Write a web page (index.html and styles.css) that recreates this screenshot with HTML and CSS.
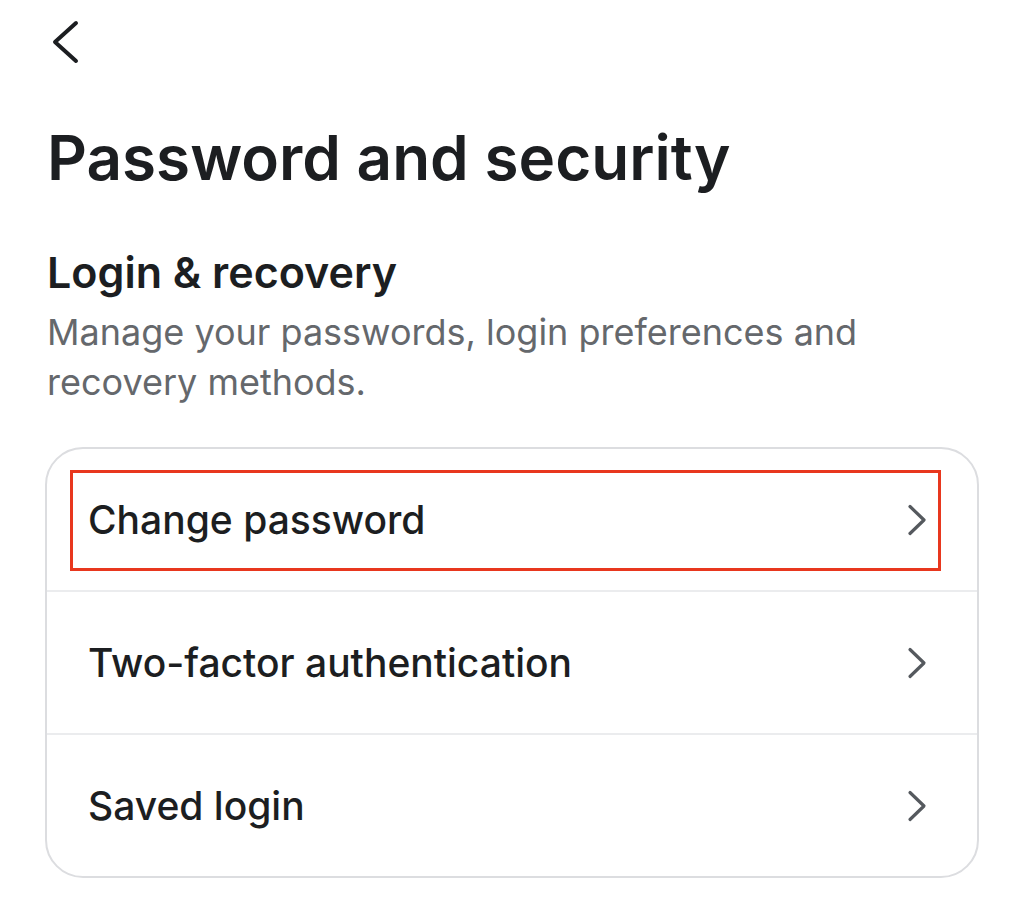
FILE: index.html
```html
<!DOCTYPE html>
<html lang="en">
<head>
<meta charset="utf-8">
<title>Password and security</title>
<link rel="stylesheet" href="styles.css">
</head>
<body>
<div class="page">
  <div class="topbar">
    <svg class="back" width="30" height="44" viewBox="0 0 30 44" aria-hidden="true">
      <path d="M26 3 L5 22 L26 41" fill="none" stroke="#1c1e21" stroke-width="4" stroke-linecap="round" stroke-linejoin="round"/>
    </svg>
  </div>
  <h1 class="title">Password and security</h1>
  <h2 class="section-title">Login &amp; recovery</h2>
  <p class="section-desc">Manage your passwords, login preferences and recovery methods.</p>
  <div class="card">
    <div class="row highlighted">
      <span class="row-label">Change password</span>
      <svg class="chev" width="22" height="32" viewBox="0 0 22 32" aria-hidden="true"><path d="M5 2.5 L19 16 L5 29.5" fill="none" stroke="#55595e" stroke-width="3.2" stroke-linecap="round" stroke-linejoin="round"/></svg>
      <div class="highlight-box"></div>
    </div>
    <div class="row">
      <span class="row-label">Two-factor authentication</span>
      <svg class="chev" width="22" height="32" viewBox="0 0 22 32" aria-hidden="true"><path d="M5 2.5 L19 16 L5 29.5" fill="none" stroke="#55595e" stroke-width="3.2" stroke-linecap="round" stroke-linejoin="round"/></svg>
    </div>
    <div class="row">
      <span class="row-label">Saved login</span>
      <svg class="chev" width="22" height="32" viewBox="0 0 22 32" aria-hidden="true"><path d="M5 2.5 L19 16 L5 29.5" fill="none" stroke="#55595e" stroke-width="3.2" stroke-linecap="round" stroke-linejoin="round"/></svg>
    </div>
  </div>
</div>
</body>
</html>
```

FILE: styles.css
```css
html, body {
  margin: 0;
  padding: 0;
  background: #ffffff;
}

body {
  font-family: Inter, "Noto Sans", "Liberation Sans", sans-serif;
  color: #1c1e21;
}

.page {
  padding: 20px 45px 0 45px;
  display: flex;
  flex-direction: column;
}

.topbar {
  height: 44px;
  display: flex;
  align-items: center;
  padding-left: 5px;
}

.back {
  display: block;
}

.title {
  margin: 56px 0 0 2px;
  font-size: 62px;
  font-weight: 600;
  line-height: 76px;
  letter-spacing: 0;
}

.section-title {
  margin: 52px 0 0 2px;
  font-size: 43px;
  font-weight: 600;
  line-height: 48px;
}

.section-desc {
  margin: 11px 0 0 2px;
  font-size: 36px;
  font-weight: 400;
  line-height: 50px;
  color: #65686c;
  max-width: 850px;
}

.card {
  margin-top: 40px;
  border: 2px solid #dcdde0;
  border-radius: 38px;
  display: flex;
  flex-direction: column;
  box-sizing: border-box;
  width: 934px;
}

.row {
  position: relative;
  height: 141px;
  display: flex;
  align-items: center;
  justify-content: space-between;
  padding: 0 50px 0 41px;
  border-top: 2px solid #ebecee;
}

.row:first-child {
  border-top: none;
}

.row-label {
  font-size: 39px;
  font-weight: 500;
  color: #1c1e21;
}

.chev {
  display: block;
}

.highlight-box {
  position: absolute;
  left: 23px;
  right: 36px;
  top: 21px;
  bottom: 19px;
  border: 3px solid #e8371e;
  pointer-events: none;
}
```
